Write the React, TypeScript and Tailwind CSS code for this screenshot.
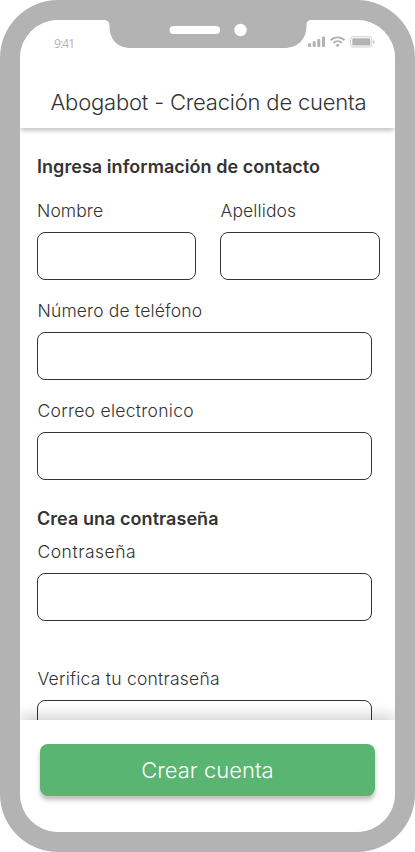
import React from "react";

function Notch() {
  return (
    <svg className="absolute left-[84px] top-0 h-[28px] w-[208px]" viewBox="0 0 208 28" aria-hidden="true">
      <path
        d="M0 0C3.5 0 5.5 2.2 5.5 6C5.5 19 13 28 27 28H180C194 28 202.500 19 202.500 6C202.500 2.200 203.500 0 207 0Z"
        fill="#b3b3b3"
      />
      <rect x="65.500" y="6" width="50.500" height="8" rx="4" fill="#fff" />
      <circle cx="136.500" cy="10" r="6.200" fill="#fff" />
    </svg>
  );
}

function StatusIcons() {
  return (
    <svg className="h-[12px] w-[68px]" viewBox="0 0 68 12" fill="#b3b3b3" aria-hidden="true">
      <rect x="0" y="7.300" width="3" height="3.700" rx="0.800" />
      <rect x="4.700" y="5.300" width="3" height="5.700" rx="0.800" />
      <rect x="9.300" y="3" width="3" height="8" rx="0.800" />
      <rect x="14" y="0.500" width="3" height="10.500" rx="0.800" />
      <g fill="none" stroke="#b3b3b3" strokeWidth="1.900">
        <path d="M22.600 4.300C26.600 0.400 32.600 0.400 36.600 4.300" />
        <path d="M25.200 7C27.800 4.500 31.400 4.500 34 7" />
      </g>
      <path d="M27.300 9C28.700 7.800 30.500 7.800 31.900 9L29.600 11.300Z" />
      <rect x="42.700" y="0.700" width="21" height="10.300" rx="2.600" fill="none" stroke="#cfcfcf" />
      <rect x="44.300" y="2.200" width="17.900" height="7.400" rx="1.200" />
      <path d="M65 4V8C66 7.600 66.600 6.900 66.600 6S66 4.400 65 4Z" fill="#cfcfcf" />
    </svg>
  );
}

function Field({ label, labelClass, className }: { label: string; labelClass: string; className: string }) {
  return (
    <label className={`block ${className}`}>
      <span className={`block h-6 whitespace-nowrap text-[17.500px] leading-6 font-light ${labelClass}`}>{label}</span>
      <input className="mt-[9px] block h-12 w-full rounded-lg border border-[#333] bg-transparent px-3 outline-none" />
    </label>
  );
}

export default function App() {
  return (
    <div className="h-[852px] w-[415px] overflow-hidden rounded-[58px] bg-[#b3b3b3] p-5 font-['Inter',sans-serif] text-[#333]">
      <div className="relative flex h-full flex-col overflow-hidden rounded-[38px] bg-white">
        <header className="relative z-10 flex h-[108px] shrink-0 flex-col bg-white shadow-[0_4px_4px_-1px_rgba(0,0,0,0.22)]">
          <Notch />
          <div className="flex h-[44px] items-center justify-between pr-[19px] pl-[34px]">
            <span className="pt-[3px] font-['Open_Sans',sans-serif] text-[12px] leading-none font-normal tracking-[-0.900px] text-[#b3b3b3]">9:41</span>
            <StatusIcons />
          </div>
          <h1 className="mt-[22px] pl-[30.500px] text-[22px] leading-8 font-light tracking-[-0.200px] whitespace-nowrap">Abogabot - Creación de cuenta</h1>
        </header>
        <main className="min-h-0 flex-1 overflow-hidden pl-[17px]">
          <h2 className="mt-[27px] h-6 text-[18px] leading-6 font-semibold tracking-[0.050px] whitespace-nowrap">Ingresa información de contacto</h2>
          <div className="mt-5 flex gap-6">
            <Field label="Nombre" labelClass="tracking-[0.100px]" className="w-[159px]" />
            <Field label="Apellidos" labelClass="tracking-[0.120px] pl-[0.500px]" className="w-[160px]" />
          </div>
          <Field label="Número de teléfono" labelClass="tracking-[0.150px] pl-[0.500px]" className="mt-[19px] w-[335px]" />
          <Field label="Correo electronico" labelClass="tracking-[0.280px] pl-[0.500px]" className="mt-[19px] w-[335px]" />
          <h2 className="mt-[27px] h-6 text-[18px] leading-6 font-semibold tracking-[0.050px] whitespace-nowrap">Crea una contraseña</h2>
          <Field label="Contraseña" labelClass="tracking-[0.500px] pl-[0.500px]" className="mt-[9px] w-[335px]" />
          <Field label="Verifica tu contraseña" labelClass="tracking-[0.230px] pl-[0.500px]" className="mt-[46px] w-[335px]" />
        </main>
        <footer className="relative z-10 h-[112px] shrink-0 bg-white pt-6 pl-5 shadow-[0_-4px_14px_rgba(0,0,0,0.19)]">
          <button className="h-[52px] w-[335px] rounded-lg bg-[#5ab472] text-[22px] font-light text-white shadow-[0_4px_4px_rgba(0,0,0,0.25)]">
            Crear cuenta
          </button>
        </footer>
      </div>
    </div>
  );
}
